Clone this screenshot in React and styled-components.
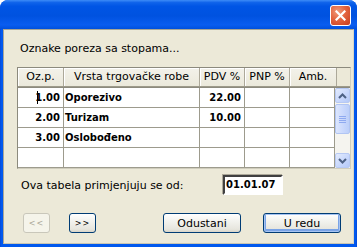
import styled, { createGlobalStyle } from "styled-components";

const GlobalStyle = createGlobalStyle`
  html, body {
    margin: 0;
    padding: 0;
    background: #ffffff;
  }
  body {
    font-family: "DejaVu Sans", Tahoma, sans-serif;
    font-size: 11px;
    color: #000;
  }
`;

const columns = [
  { key: "oz", title: "Oz.p.", width: 46, align: "right" },
  { key: "vrsta", title: "Vrsta trgovačke robe", width: 136, align: "left" },
  { key: "pdv", title: "PDV %", width: 45, align: "right" },
  { key: "pnp", title: "PNP %", width: 45, align: "right" },
  { key: "amb", title: "Amb.", width: 45, align: "right" },
];

const rows = [
  { oz: "1.00", vrsta: "Oporezivo", pdv: "22.00", pnp: "", amb: "" },
  { oz: "2.00", vrsta: "Turizam", pdv: "10.00", pnp: "", amb: "" },
  { oz: "3.00", vrsta: "Oslobođeno", pdv: "", pnp: "", amb: "" },
  { oz: "", vrsta: "", pdv: "", pnp: "", amb: "" },
];

const App = () => {
  return (
    <>
      <GlobalStyle />
      <Window>
        <TitleBar>
          <CloseButton>
            <svg width="11" height="11" viewBox="0 0 11 11">
              <path
                d="M1.5 1.5 L9.5 9.5 M9.5 1.5 L1.5 9.5"
                stroke="#ffffff"
                strokeWidth="2.2"
                strokeLinecap="square"
              />
            </svg>
          </CloseButton>
        </TitleBar>
        <Frame>
          <Client>
            <Heading>Oznake poreza sa stopama...</Heading>
            <Table>
              <HeaderRow>
                {columns.map((c, i) => (
                  <HeaderCell key={c.key} $w={i === 4 ? 47 : c.width}>
                    {c.title}
                  </HeaderCell>
                ))}
                <HeaderFiller />
              </HeaderRow>
              <Body>
                <Rows>
                  {rows.map((r, ri) => (
                    <Row key={ri}>
                      {columns.map((c) => (
                        <Cell key={c.key} $w={c.width} $align={c.align}>
                          {ri === 0 && c.key === "oz" && <Caret />}
                          {r[c.key]}
                        </Cell>
                      ))}
                    </Row>
                  ))}
                </Rows>
                <ScrollBar>
                  <ScrollButton>
                    <svg width="9" height="6" viewBox="0 0 9 6">
                      <path d="M1 5 L4.5 1.5 L8 5" fill="none" stroke="#4d6185" strokeWidth="2" />
                    </svg>
                  </ScrollButton>
                  <Thumb>
                    <Grip />
                    <Grip />
                    <Grip />
                    <Grip />
                  </Thumb>
                  <Track />
                  <ScrollButton>
                    <svg width="9" height="6" viewBox="0 0 9 6">
                      <path d="M1 1 L4.5 4.5 L8 1" fill="none" stroke="#4d6185" strokeWidth="2" />
                    </svg>
                  </ScrollButton>
                </ScrollBar>
              </Body>
            </Table>
            <DateRow>
              <Label>Ova tabela primjenjuju se od:</Label>
              <DateField>01.01.07</DateField>
            </DateRow>
            <ButtonRow>
              <NavButton disabled>&lt;&lt;</NavButton>
              <NavButton>&gt;&gt;</NavButton>
              <Spacer />
              <XpButton>Odustani</XpButton>
              <XpButton $default>U redu</XpButton>
            </ButtonRow>
          </Client>
        </Frame>
      </Window>
    </>
  );
};

const Window = styled.div`
  width: 357px;
  height: 247px;
  display: flex;
  flex-direction: column;
  background: #0055e5;
  border-radius: 8px 8px 0 0;
  overflow: hidden;
`;

const TitleBar = styled.div`
  height: 29px;
  flex: none;
  display: flex;
  justify-content: flex-end;
  align-items: flex-start;
  padding: 5px 6px 0 0;
  box-sizing: border-box;
  background: linear-gradient(
    180deg,
    #3d8cf7 0%,
    #0f63ea 9%,
    #0055e5 22%,
    #0052e0 55%,
    #0a5df0 86%,
    #0050dd 100%
  );
`;

const CloseButton = styled.div`
  width: 21px;
  height: 21px;
  box-sizing: border-box;
  border: 1px solid #ffffff;
  border-radius: 3px;
  display: flex;
  align-items: center;
  justify-content: center;
  background: radial-gradient(circle at 35% 30%, #f09a7a 0%, #e3643f 45%, #c73b1c 100%);
`;

const Frame = styled.div`
  flex: 1;
  display: flex;
  padding: 0 3px 3px 3px;
  background: linear-gradient(90deg, #0842d0 0, #0058ee 1px, #0058ee calc(100% - 1px), #0842d0 100%);
`;

const Client = styled.div`
  flex: 1;
  background: #ece9d8;
  border: 1px solid #9d9a8a;
  border-color: #a9a696 #d8d5c4 #c8c5b4 #a9a696;
  padding: 12px 2px 0 13px;
  display: flex;
  flex-direction: column;
`;

const Heading = styled.div`
  height: 13px;
  line-height: 13px;
  margin: 0 0 12px 3px;
  white-space: nowrap;
`;

const Table = styled.div`
  width: 334px;
  box-sizing: border-box;
  border: 1px solid #8c8a7d;
  border-right-color: #d0cdbd;
  border-bottom-color: #d0cdbd;
  display: flex;
  flex-direction: column;
  background: #ece9d8;
`;

const HeaderRow = styled.div`
  display: flex;
  height: 19px;
  box-sizing: border-box;
  border-bottom: 1px solid #9d9a8a;
`;

const HeaderCell = styled.div`
  flex: 0 0 ${(p) => p.$w}px;
  box-sizing: border-box;
  border-right: 1px solid #aca899;
  box-shadow: inset 1px 1px 0 #ffffff;
  background: linear-gradient(180deg, #f3f2ea 0%, #ebe9db 100%);
  line-height: 18px;
  text-align: center;
  white-space: nowrap;
  overflow: hidden;
`;

const HeaderFiller = styled.div`
  flex: 1;
`;

const Body = styled.div`
  display: flex;
  border-top: 1px solid #8c8a7d;
`;

const Rows = styled.div`
  display: flex;
  flex-direction: column;
  background: #ffffff;
`;

const Row = styled.div`
  display: flex;
  height: 20px;
`;

const Cell = styled.div`
  position: relative;
  flex: 0 0 ${(p) => p.$w}px;
  box-sizing: border-box;
  border-right: 1px solid #9d9b8d;
  border-bottom: 1px solid #9d9b8d;
  padding: 0 3px 0 1px;
  font-size: 10px;
  font-weight: bold;
  line-height: 19px;
  text-align: ${(p) => p.$align};
  white-space: nowrap;
  overflow: hidden;
`;

const Caret = styled.span`
  position: absolute;
  left: 19px;
  top: 3px;
  width: 1px;
  height: 13px;
  background: #000000;
`;

const ScrollBar = styled.div`
  width: 15px;
  flex: none;
  display: flex;
  flex-direction: column;
  background: #f5f4ef;
`;

const ScrollButton = styled.div`
  height: 15px;
  flex: none;
  box-sizing: border-box;
  border: 1px solid #b7c9f3;
  border-radius: 2px;
  background: linear-gradient(135deg, #e3ebfd 0%, #c6d6fc 60%, #b5c9f7 100%);
  display: flex;
  align-items: center;
  justify-content: center;
`;

const Thumb = styled.div`
  height: 30px;
  flex: none;
  margin-top: 1px;
  box-sizing: border-box;
  border: 1px solid #b1c5f3;
  border-radius: 2px;
  background: linear-gradient(90deg, #dce6fd 0%, #c8d7fc 60%, #bccff9 100%);
  display: flex;
  flex-direction: column;
  align-items: center;
  justify-content: center;
  gap: 1px;
`;

const Grip = styled.div`
  width: 7px;
  height: 1px;
  background: #8faaf0;
`;

const Track = styled.div`
  flex: 1;
`;

const DateRow = styled.div`
  display: flex;
  align-items: center;
  margin-top: 6px;
  height: 20px;
`;

const Label = styled.div`
  flex: 0 0 202px;
  margin-left: 4px;
  white-space: nowrap;
`;

const DateField = styled.div`
  width: 60px;
  height: 20px;
  box-sizing: border-box;
  border: 2px solid;
  border-color: #404040 #ffffff #ffffff #404040;
  box-shadow: -1px -1px 0 #aca899;
  background: #ffffff;
  font-size: 10px;
  font-weight: bold;
  line-height: 16px;
  padding-left: 1px;
`;

const ButtonRow = styled.div`
  display: flex;
  align-items: center;
  margin-top: 18px;
  padding: 0 10px 0 6px;
  gap: 19px;
`;

const Spacer = styled.div`
  flex: 1;
`;

const NavButton = styled.button`
  width: 27px;
  height: 20px;
  padding: 0;
  font-family: "DejaVu Sans", Tahoma, sans-serif;
  font-size: 8px;
  letter-spacing: 1px;
  color: #000;
  border: 1px solid #003c74;
  border-radius: 3px;
  background: linear-gradient(180deg, #ffffff 0%, #f4f4f0 35%, #e6e5dd 85%, #d8d4c8 100%);
  &:disabled {
    color: #aca899;
    border-color: #c9c7ba;
    background: #f5f4ea;
  }
`;

const XpButton = styled.button`
  width: 78px;
  height: 20px;
  padding: 0;
  margin-left: ${(p) => (p.$default ? "3px" : "0")};
  font-family: "DejaVu Sans", Tahoma, sans-serif;
  font-size: 11px;
  color: #000;
  border: 1px solid #003c74;
  border-radius: 3px;
  background: linear-gradient(180deg, #ffffff 0%, #f4f4f0 35%, #e6e5dd 85%, #d8d4c8 100%);
  box-shadow: ${(p) =>
    p.$default ? "inset 0 0 0 1px #a6c4f2, inset 0 -1px 0 2px #7aa3e6" : "none"};
`;

export default App;
